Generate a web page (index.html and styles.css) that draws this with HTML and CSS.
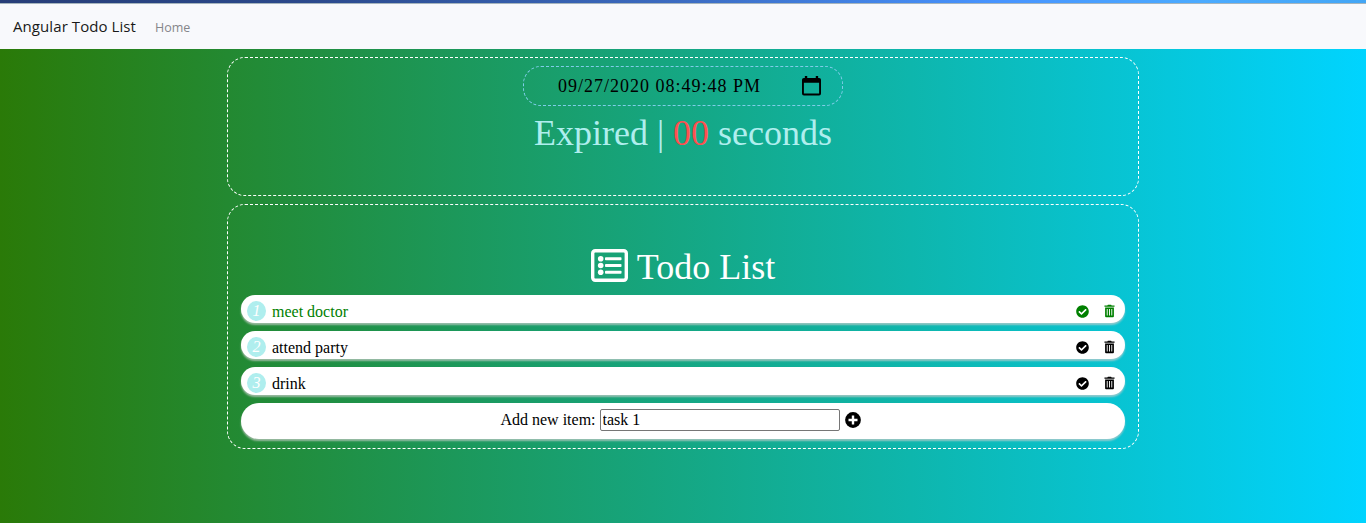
FILE: index.html
```html
<!DOCTYPE html>
<html lang="en">
<head>
<meta charset="utf-8">
<title>Angular Todo List</title>
<link rel="stylesheet" href="styles.css">
</head>
<body>
<svg class="sprite" width="0" height="0">
  <symbol id="check" viewBox="0 0 512 512"><path fill="currentColor" d="M504 256c0 137-111 248-248 248S8 393 8 256 119 8 256 8s248 111 248 248zM227 387l184-184c6-6 6-16 0-22l-22-23c-7-6-17-6-23 0L216 308l-70-70c-6-6-16-6-23 0l-22 23c-6 6-6 16 0 22l104 104c6 7 16 7 22 0z"/></symbol>
  <symbol id="trash" viewBox="0 0 12 14"><path fill="currentColor" fill-rule="evenodd" d="M.5 1H3.600L4.300.2h3.400l.7.8h3.100v1.300H.5zM1.200 3.300h9.600V12.700a1 1 0 0 1-1 1H2.200a1 1 0 0 1-1-1zM3 4.800v7h1v-7zM5.500 4.800v7h1v-7zM8 4.800v7h1v-7z"/></symbol>
</svg>
<div class="progress"></div>
<nav class="navbar">
  <a class="brand">Angular Todo List</a>
  <a class="nav-link">Home</a>
</nav>
<main class="container">
  <section class="panel timer">
    <div class="date-input">
      <span class="date-value">09/27/2020 08:49:48 PM</span>
      <svg class="calendar" viewBox="0 0 20 21"><path fill="currentColor" fill-rule="evenodd" d="M3 0h2.500v2h9V0H17v2h1a2 2 0 0 1 2 2v14.500a2 2 0 0 1-2 2H2a2 2 0 0 1-2-2V4a2 2 0 0 1 2-2h1zM2 7v11.500h16V7z"/></svg>
    </div>
    <h1 class="countdown">Expired | <span class="count">00</span> seconds</h1>
  </section>
  <section class="panel todo">
    <h2 class="title">
      <svg class="list-icon" viewBox="0 0 37 33"><rect x="1.700" y="1.700" width="33.600" height="29.600" rx="2.500" fill="none" stroke="currentColor" stroke-width="3.400"/><g fill="currentColor"><circle cx="9.700" cy="9.800" r="2.800"/><circle cx="9.700" cy="16.500" r="2.800"/><circle cx="9.700" cy="23.200" r="2.800"/><rect x="14" y="8.300" width="16.500" height="3" rx=".8"/><rect x="14" y="15" width="16.500" height="3" rx=".8"/><rect x="14" y="21.700" width="16.500" height="3" rx=".8"/></g></svg>
      <span>Todo List</span>
    </h2>
    <div class="item done"><i class="number">1</i><span class="label">meet doctor</span><svg class="check"><use href="#check"/></svg><svg class="trash"><use href="#trash"/></svg></div>
    <div class="item"><i class="number">2</i><span class="label">attend party</span><svg class="check"><use href="#check"/></svg><svg class="trash"><use href="#trash"/></svg></div>
    <div class="item"><i class="number">3</i><span class="label">drink</span><svg class="check"><use href="#check"/></svg><svg class="trash"><use href="#trash"/></svg></div>
    <div class="add-row">
      <label for="task">Add new item:</label>
      <input id="task" class="task" type="text" value="task 1">
      <svg class="plus" viewBox="0 0 16 16"><circle cx="8" cy="8" r="7.900" fill="currentColor"/><path d="M8 3.500v9M3.500 8h9" stroke="#fff" stroke-width="2.400"/></svg>
    </div>
  </section>
</main>
</body>
</html>
```
FILE: styles.css
```css
* { box-sizing: border-box; }
body {
  margin: 0;
  height: 523px;
  overflow: hidden;
  font: 16px/24px "Liberation Serif", "Times New Roman", serif;
  background: linear-gradient(90deg, #2a7a08 0%, #00d4ff 100%);
}
svg { display: block; flex: none; }
.sprite { position: absolute; }
.progress {
  height: 4px;
  border-bottom: 1px solid #a6b5bd;
  background: linear-gradient(90deg, #273e78 0%, #2b498b 22%, #3c6cc2 50%, #4794ff 73%, #4babff 88%, #43a6f5 100%);
}
.navbar {
  display: flex;
  align-items: center;
  height: 45px;
  padding: 0 13px;
  background: #f8f9fc;
  font-family: "Open Sans", "Noto Sans", sans-serif;
}
.brand { width: 142px; padding-bottom: 2px; font-size: 15px; letter-spacing: .08px; color: #191919; white-space: nowrap; }
.nav-link { padding-top: 2px; font-size: 12.500px; color: #85868a; }
.container { width: 912px; margin: 8px auto 0; }
.panel { border: 1px dashed #fff; border-radius: 18px; }
.timer { height: 139px; padding-top: 8px; }
.date-input {
  display: flex;
  justify-content: space-between;
  align-items: center;
  width: 320px;
  height: 40px;
  margin: 0 auto;
  padding: 0 21px 0 34px;
  border: 1px dashed #7fcde9;
  border-radius: 18px;
}
.date-value { font-size: 18px; letter-spacing: 1px; white-space: nowrap; }
.calendar { width: 19px; height: 20px; }
.countdown { margin: 6px 0 0; font-size: 36px; line-height: 43px; font-weight: 400; text-align: center; color: #afeeee; }
.count { color: #ff4f4f; }
.todo { height: 245px; margin-top: 8px; padding: 41px 13px 0; }
.title {
  display: flex;
  justify-content: center;
  align-items: center;
  gap: 9px;
  height: 43px;
  margin: 0 0 6px;
  font-size: 36px;
  line-height: 43px;
  font-weight: 400;
  color: #fff;
}
.list-icon { width: 37px; height: 33px; margin-top: -4px; }
.item, .add-row { background: #fff; box-shadow: 0 2px 2px rgba(205, 205, 205, .7); }
.item {
  display: flex;
  align-items: center;
  height: 28px;
  margin-bottom: 8px;
  padding: 4px 10px 0 6px;
  border-radius: 15px;
}
.done { color: #008000; }
.number {
  width: 19px;
  height: 20px;
  margin-right: 6px;
  border-radius: 50%;
  line-height: 20px;
  text-align: center;
  color: #fff;
  background: #afeeee;
}
.label { flex: 1; padding-top: 1px; }
.check { width: 13px; height: 13px; margin-right: 15px; }
.trash { width: 11px; height: 14px; }
.add-row {
  display: flex;
  justify-content: center;
  align-items: center;
  height: 36px;
  padding-right: 5px;
  padding-bottom: 3px;
  border-radius: 18px;
}
.task {
  width: 240px;
  height: 22px;
  margin: 0 5px 0 4px;
  padding: 1px 2px;
  border: 1px solid #767676;
  border-radius: 2px;
  font: inherit;
  color: #000;
}
.plus { width: 16px; height: 16px; }
```
